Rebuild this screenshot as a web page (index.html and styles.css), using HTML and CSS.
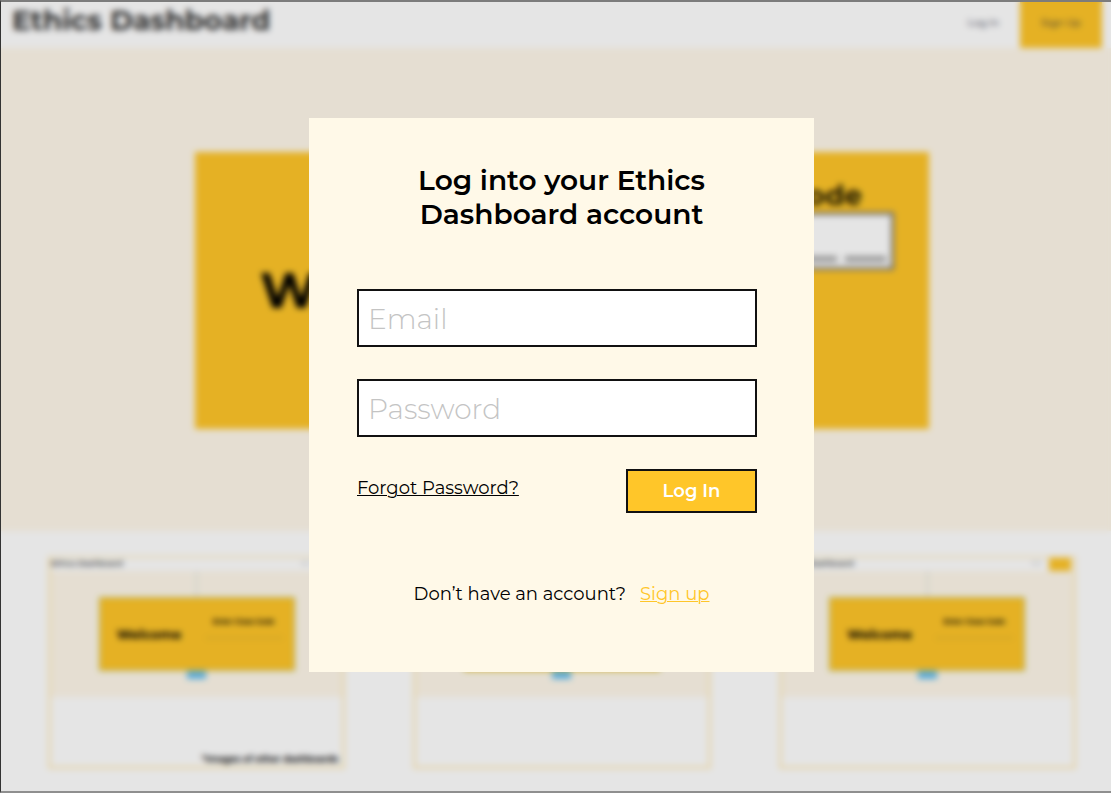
FILE: index.html
```html
<!DOCTYPE html>
<html lang="en">
<head>
<meta charset="utf-8">
<title>Ethics Dashboard – Log In</title>
<link rel="stylesheet" href="styles.css">
</head>
<body>
<div class="page">
  <header class="topbar">
    <div class="brand">Ethics Dashboard</div>
    <nav class="topnav">
      <a class="nav-login" href="#login">Log In</a>
      <a class="nav-signup" href="#signup">Sign Up</a>
    </nav>
  </header>
  <section class="hero">
    <div class="hero-box">
      <div class="welcome">Welcome</div>
      <div class="code">
        <div class="code-title">Enter Class Code</div>
        <div class="code-box"><i></i><i></i><i></i><i></i><i></i><i></i></div>
      </div>
    </div>
  </section>
  <section class="gallery">
    <article class="card">
      <div class="mini-bar"><span class="mini-brand">Ethics Dashboard</span><span class="mini-login">Log In</span><span class="mini-signup"></span></div>
      <div class="mini-hero">
        <div class="guide"></div>
        <div class="mini-box"><b class="mini-welcome">Welcome</b><div class="mini-code"><b>Enter Class Code</b><div class="mini-dashes"></div></div></div>
        <div class="tag"></div>
      </div>
      <p class="caption">*Images of other dashboards</p>
    </article>
    <article class="card">
      <div class="mini-bar"><span class="mini-brand">Ethics Dashboard</span><span class="mini-login">Log In</span><span class="mini-signup"></span></div>
      <div class="mini-hero">
        <div class="guide"></div>
        <div class="mini-box"><b class="mini-welcome">Welcome</b><div class="mini-code"><b>Enter Class Code</b><div class="mini-dashes"></div></div></div>
        <div class="tag"></div>
      </div>
    </article>
    <article class="card">
      <div class="mini-bar"><span class="mini-brand">Ethics Dashboard</span><span class="mini-login">Log In</span><span class="mini-signup"></span></div>
      <div class="mini-hero">
        <div class="guide"></div>
        <div class="mini-box"><b class="mini-welcome">Welcome</b><div class="mini-code"><b>Enter Class Code</b><div class="mini-dashes"></div></div></div>
        <div class="tag"></div>
      </div>
    </article>
  </section>
</div>
<div class="overlay">
  <main class="modal" role="dialog" aria-labelledby="title">
    <h1 class="title" id="title">Log into your Ethics Dashboard account</h1>
    <form class="form">
      <input class="field" type="email" placeholder="Email" aria-label="Email">
      <input class="field" type="password" placeholder="Password" aria-label="Password">
      <div class="actions">
        <a class="forgot" href="#forgot">Forgot Password?</a>
        <button class="submit" type="button">Log In</button>
      </div>
    </form>
    <p class="join"><span>Don’t have an account?</span><a class="join-link" href="#signup">Sign up</a></p>
  </main>
</div>
</body>
</html>
```
FILE: styles.css
```css
* { box-sizing: border-box; }
body {
  margin: 0;
  font-family: Montserrat, Inter, "Open Sans", sans-serif;
  color: #000;
  background: #fff;
}
p, h1 { margin: 0; }
.page {
  height: 100vh;
  overflow: hidden;
}

.topbar {
  display: flex;
  justify-content: space-between;
  height: 48px;
  padding: 0 9px 0 12px;
}
.brand {
  font-size: 28px;
  font-weight: 700;
  line-height: 41px;
  color: #333;
}
.topnav { display: flex; gap: 21px; }
.topnav a {
  font-size: 10px;
  line-height: 46px;
  text-decoration: none;
  color: #23273f;
}
.topnav .nav-signup {
  width: 82px;
  text-align: center;
  background: #ffc629;
}

.hero {
  padding: 104px 182px 102px 195px;
  background: #fff8ea;
}
.hero-box {
  display: flex;
  justify-content: space-between;
  height: 277px;
  padding: 0 35px 0 65px;
  background: #ffc629;
}
.welcome {
  align-self: center;
  font-size: 50px;
  font-weight: 700;
}
.code { width: 300px; padding-top: 26px; }
.code-title {
  padding-right: 32px;
  font-size: 28px;
  font-weight: 700;
  line-height: 34px;
  text-align: right;
  white-space: nowrap;
  color: #221a00;
}
.code-box {
  display: flex;
  align-items: flex-end;
  gap: 8px;
  height: 58px;
  padding: 5px;
  border: 3px solid #777;
  background: #fff;
}
.code-box i { flex: 1; height: 6px; background: #aaa; }

.gallery {
  display: grid;
  grid-template-columns: repeat(3, 1fr);
  gap: 68px;
  padding: 25px 35px 24px 48px;
}
.card {
  height: 213px;
  border: 3px solid #ffefc4;
  border-top-width: 2px;
}
.mini-bar {
  display: flex;
  align-items: flex-start;
  height: 13px;
  gap: 8px;
  padding-right: 2px;
  font-size: 8px;
  line-height: 10px;
}
.mini-brand { flex: 1; font-weight: 500; color: #000; }
.mini-login { font-size: 3px; color: #556; }
.mini-signup { width: 22px; height: 13px; background: #ffc629; }
.mini-hero {
  display: flex;
  flex-direction: column;
  align-items: center;
  height: 126px;
  background: #fff8ea;
}
.guide { width: 1px; height: 26px; background: #d0d8d8; }
.mini-box {
  display: flex;
  justify-content: space-between;
  align-items: center;
  width: 196px;
  height: 74px;
  padding: 0 11px 0 17px;
  border: 1px solid #b9bf62;
  background: #ffc629;
}
.mini-welcome { font-size: 13px; }
.mini-code {
  display: grid;
  gap: 10px;
  width: 78px;
  padding-bottom: 12px;
  font-size: 7px;
  line-height: 10px;
  text-align: center;
  white-space: nowrap;
}
.mini-dashes { height: 2px; background: #e8b42c; }
.tag { width: 19px; height: 8px; background: #66bff2; }
.caption {
  padding: 54px 4px 0 0;
  font-size: 9px;
  font-weight: 700;
  line-height: 16px;
  text-align: right;
}

.overlay {
  position: fixed;
  inset: 0;
  display: grid;
  place-items: center;
  padding: 0 0 3px 12px;
  background: rgba(0, 0, 0, .1);
  backdrop-filter: blur(3px);
}
.overlay::after {
  content: "";
  position: absolute;
  inset: 0;
  border: solid #7c7c7c;
  border-width: 2px 0 2px 1px;
  border-left-color: #333;
  border-bottom-color: #8f8f8f;
  pointer-events: none;
}
.modal {
  width: 505px;
  max-width: 100%;
  padding: 45px 48px 66px;
  background: #fff9e8;
}
.title {
  max-width: 320px;
  margin: 0 auto;
  font-size: 28px;
  font-weight: 600;
  line-height: 34px;
  text-align: center;
}
.form {
  display: grid;
  gap: 32px;
  max-width: 400px;
  margin-top: 58px;
}
.field {
  width: 100%;
  height: 58px;
  padding: 2px 9px 0;
  border: 2px solid #111;
  border-radius: 0;
  background: #fff;
  font: 300 28px/34px Montserrat, Inter, "Open Sans", sans-serif;
}
.field::placeholder { color: #c4c4c4; opacity: 1; }
.actions {
  display: flex;
  justify-content: space-between;
  align-items: flex-start;
}
.forgot {
  padding-top: 7px;
  font-size: 18px;
  line-height: 24px;
  color: #000;
  text-decoration-thickness: 1px;
}
.submit {
  width: 131px;
  height: 44px;
  padding: 0;
  border: 2px solid #111;
  background: #ffc629;
  color: #fff;
  font: 600 18px/24px Montserrat, Inter, "Open Sans", sans-serif;
}
.join {
  display: flex;
  justify-content: center;
  gap: 14px;
  margin-top: 69px;
  font-size: 18px;
  line-height: 24px;
}
.join-link { color: #ffc629; text-decoration-thickness: 1px; }
```
